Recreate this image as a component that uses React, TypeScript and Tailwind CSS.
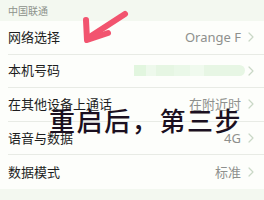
import React from "react";

const rows: { label: string; value?: string; blur?: boolean }[] = [
  { label: "网络选择", value: "Orange F" },
  { label: "本机号码", blur: true },
  { label: "在其他设备上通话", value: "在附近时" },
  { label: "语音与数据", value: "4G" },
  { label: "数据模式", value: "标准" },
];

function Chevron() {
  return (
    <svg width="6" height="10" viewBox="0 0 6 10" className="shrink-0">
      <path d="M1 1 L5 5 L1 9" fill="none" stroke="#c9d8c6" strokeWidth="1.2" strokeLinecap="round" strokeLinejoin="round" />
    </svg>
  );
}

export default function App() {
  return (
    <div
      className="relative w-[264px] h-[200px] overflow-hidden bg-[#fcfdfa]"
      style={{ fontFamily: '"Noto Sans", "Noto Sans CJK SC", sans-serif' }}
    >
      <div className="h-[21px] bg-[#f3f8f0] pl-2 flex items-center">
        <span className="text-[10px] leading-none text-[#8d928b]">中国联通</span>
      </div>
      <div className="pl-2 bg-[#fdfefb]">
        {rows.map((r, i) => (
          <div
            key={i}
            className={`h-[33.6px] flex items-center pr-[10px] ${i < rows.length - 1 ? "border-b border-[#e8ebe5]" : ""}`}
          >
            <span className="text-[13px] leading-none text-[#1e1e1e]">{r.label}</span>
            <div className="flex-1" />
            {r.blur ? (
              <div className="flex items-center h-[11px] w-[111px] rounded-r-full overflow-hidden mr-[3px]">
                <div className="h-full w-[12px] bg-[#e2f6df]" />
                <div className="h-full w-[10px] bg-[#eef9ec]" />
                <div className="h-full w-[18px] bg-[#e6f6e3]" />
                <div className="h-full w-[16px] bg-[#eaf8e8]" />
                <div className="h-full w-[14px] bg-[#f0faee]" />
                <div className="h-full flex-1 bg-[#e7f6e4]" />
              </div>
            ) : (
              <span className="text-[13px] leading-none text-[#8e908d] mr-[7px]">{r.value}</span>
            )}
            <Chevron />
          </div>
        ))}
      </div>
      <div className="h-[12px] bg-[#f3f8f0]" />

      <svg className="absolute left-0 top-0" width="264" height="200" viewBox="0 0 264 200">
        <g fill="none" stroke="#f2546f" strokeWidth="6" strokeLinecap="round" strokeLinejoin="round">
          <path d="M125 14 L88 38" />
          <path d="M86 20 L87 40 L108 33" />
        </g>
      </svg>

      <div className="absolute left-[49px] top-[108px] text-[26px] leading-none font-medium tracking-[1.6px] text-[#1b1020] whitespace-nowrap">
        重启后，第三步
      </div>
    </div>
  );
}
